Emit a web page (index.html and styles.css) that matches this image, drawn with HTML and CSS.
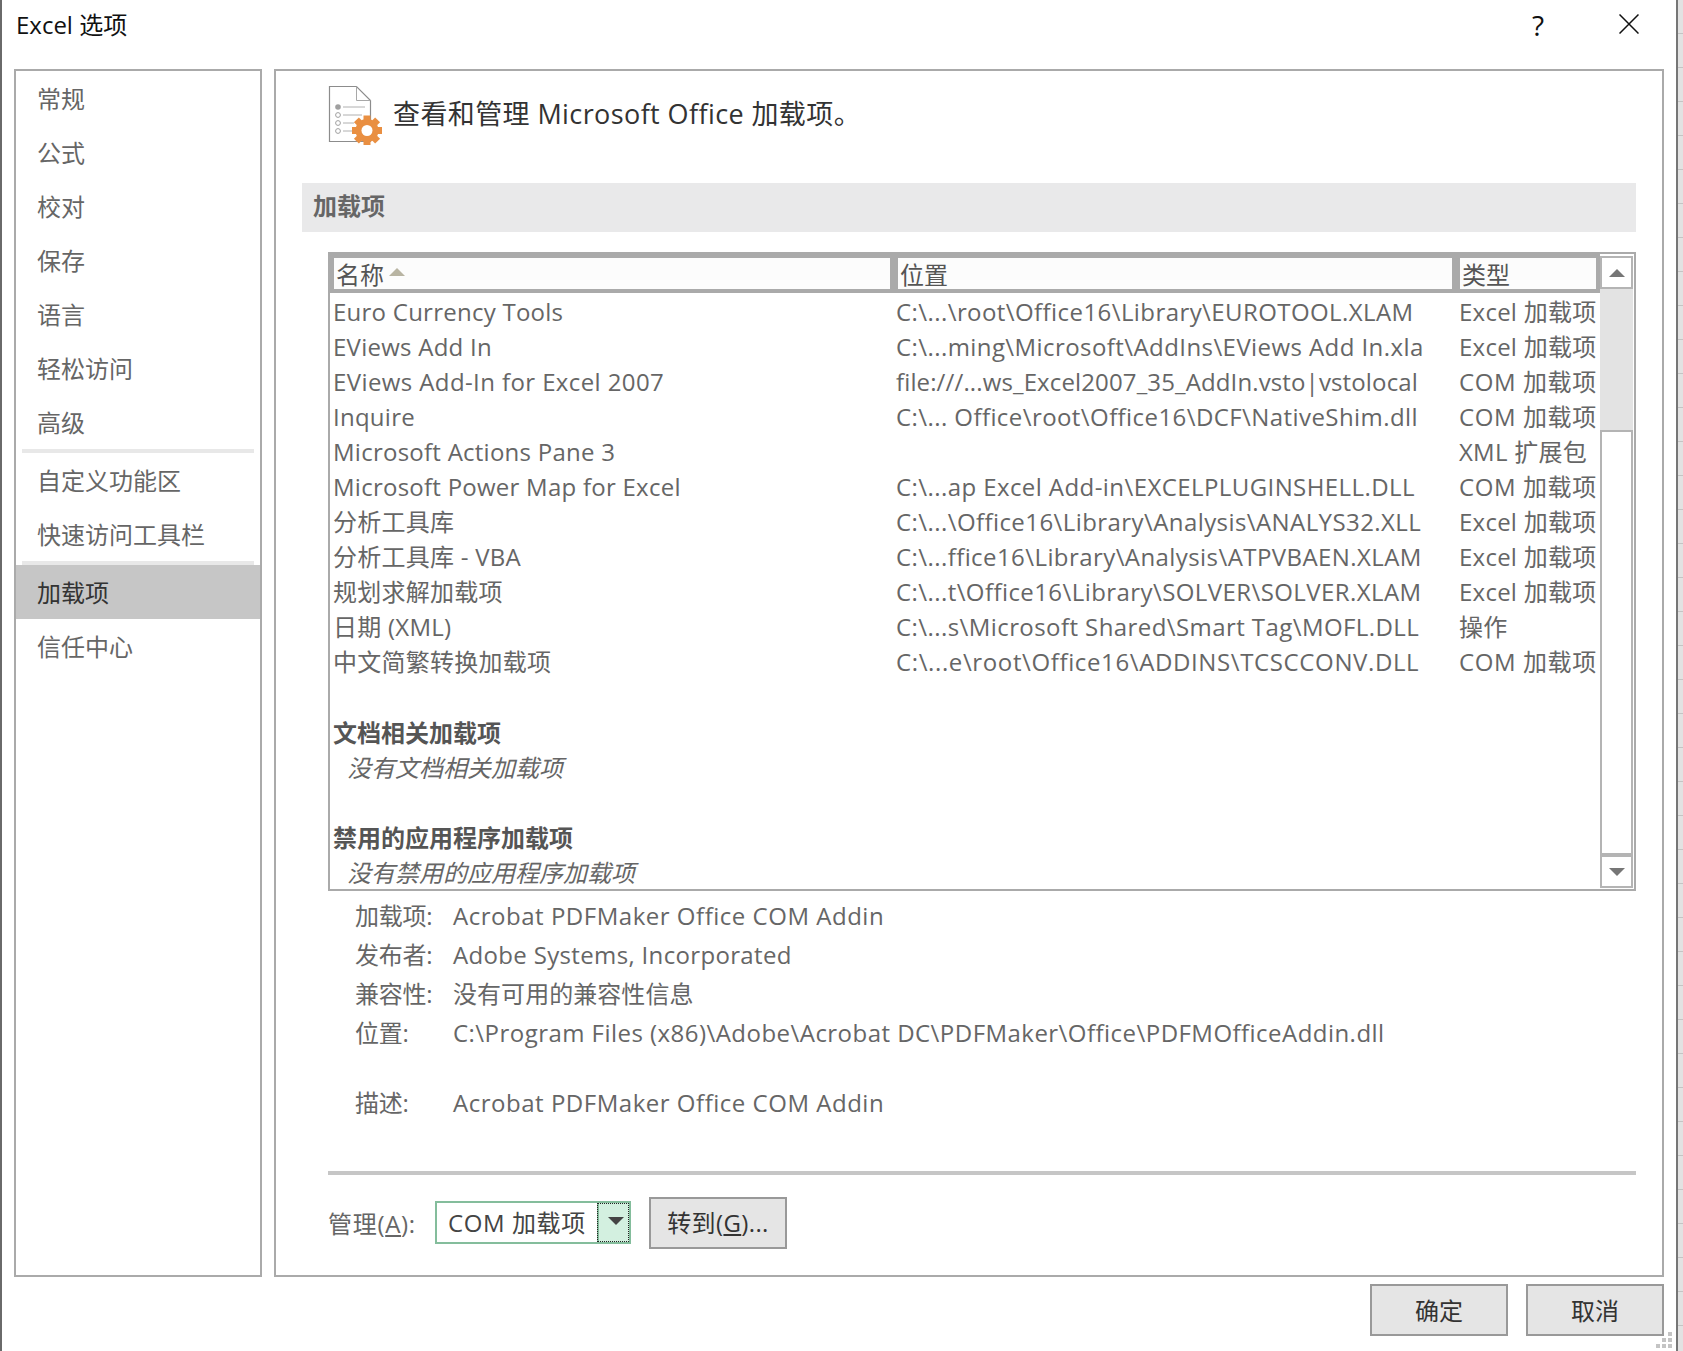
FILE: index.html
```html
<!DOCTYPE html>
<html lang="zh-CN">
<head>
<meta charset="utf-8">
<title>Excel 选项</title>
<link rel="stylesheet" href="styles.css">
</head>
<body>
<div class="desktop">
  <div class="edge-left"></div>
  <div class="window">
    <header class="titlebar">
      <span class="title">Excel 选项</span>
      <div class="title-buttons">
        <span class="help">?</span>
        <svg class="close" width="20" height="20" viewBox="0 0 20 20"><path d="M0.5 0.5 L19.5 19.5 M19.5 0.5 L0.5 19.5" stroke="#111" stroke-width="1.5" fill="none"/></svg>
      </div>
    </header>
    <div class="content">
      <nav class="nav">
        <div class="nav-item">常规</div>
        <div class="nav-item">公式</div>
        <div class="nav-item">校对</div>
        <div class="nav-item">保存</div>
        <div class="nav-item">语言</div>
        <div class="nav-item">轻松访问</div>
        <div class="nav-item">高级</div>
        <div class="nav-sep"></div>
        <div class="nav-item">自定义功能区</div>
        <div class="nav-item">快速访问工具栏</div>
        <div class="nav-sep"></div>
        <div class="nav-item selected">加载项</div>
        <div class="nav-item">信任中心</div>
      </nav>
      <main class="panel">
        <div class="heading">
          <svg class="heading-icon" width="56" height="60" viewBox="0 0 56 60">
            <path d="M1.5 1.5 H28.5 L42.5 15.5 V56.5 H1.5 Z" fill="#fff" stroke="#8c8c8c" stroke-width="1.2"/>
            <path d="M28.5 1.5 V15.5 H42.5" fill="none" stroke="#a8a8a8" stroke-width="1"/>
            <circle cx="10" cy="22" r="2.8" fill="#a0a0a0"/>
            <circle cx="10" cy="30" r="2.4" fill="#fff" stroke="#a0a0a0" stroke-width="1"/>
            <circle cx="10" cy="38" r="2.4" fill="#fff" stroke="#a0a0a0" stroke-width="1"/>
            <circle cx="10" cy="46" r="2.4" fill="#fff" stroke="#a0a0a0" stroke-width="1"/>
            <path d="M15 22 H37 M15 30 H34 M15 38 H26 M15 46 H24" stroke="#b0b0b0" stroke-width="1" fill="none"/>
            <g fill="#e98f42">
              <rect x="35.5" y="30.5" width="7" height="30"/>
              <rect x="35.5" y="30.5" width="7" height="30" transform="rotate(45 39 45.5)"/>
              <rect x="35.5" y="30.5" width="7" height="30" transform="rotate(90 39 45.5)"/>
              <rect x="35.5" y="30.5" width="7" height="30" transform="rotate(135 39 45.5)"/>
              <circle cx="39" cy="45.5" r="11.5"/>
            </g>
            <circle cx="39" cy="45.5" r="5.5" fill="#fff"/>
          </svg>
          <h1 class="heading-text">查看和管理 Microsoft Office 加载项。</h1>
        </div>
        <h2 class="section">加载项</h2>
        <div class="list">
          <div class="list-main">
            <div class="list-head">
              <div class="head-cell">名称<span class="sort"></span></div>
              <div class="head-cell">位置</div>
              <div class="head-cell">类型</div>
            </div>
            <div class="list-body">
              <div class="row"><span>Euro Currency Tools</span><span class="path">C:\...\root\Office16\Library\EUROTOOL.XLAM</span><span>Excel 加载项</span></div>
              <div class="row"><span>EViews Add In</span><span class="path">C:\...ming\Microsoft\AddIns\EViews Add In.xla</span><span>Excel 加载项</span></div>
              <div class="row"><span class="name-wide">EViews Add-In for Excel 2007</span><span class="path path-tight">file:///...ws_Excel2007_35_AddIn.vsto|vstolocal</span><span class="com">COM 加载项</span></div>
              <div class="row"><span>Inquire</span><span class="path">C:\... Office\root\Office16\DCF\NativeShim.dll</span><span class="com">COM 加载项</span></div>
              <div class="row"><span>Microsoft Actions Pane 3</span><span></span><span>XML 扩展包</span></div>
              <div class="row"><span>Microsoft Power Map for Excel</span><span class="path">C:\...ap Excel Add-in\EXCELPLUGINSHELL.DLL</span><span class="com">COM 加载项</span></div>
              <div class="row"><span>分析工具库</span><span class="path">C:\...\Office16\Library\Analysis\ANALYS32.XLL</span><span>Excel 加载项</span></div>
              <div class="row"><span>分析工具库 - VBA</span><span class="path">C:\...ffice16\Library\Analysis\ATPVBAEN.XLAM</span><span>Excel 加载项</span></div>
              <div class="row"><span>规划求解加载项</span><span class="path">C:\...t\Office16\Library\SOLVER\SOLVER.XLAM</span><span>Excel 加载项</span></div>
              <div class="row"><span>日期 (XML)</span><span class="path">C:\...s\Microsoft Shared\Smart Tag\MOFL.DLL</span><span>操作</span></div>
              <div class="row"><span>中文简繁转换加载项</span><span class="path path-wide">C:\...e\root\Office16\ADDINS\TCSCCONV.DLL</span><span class="com">COM 加载项</span></div>
              <div class="row"></div>
              <div class="group">文档相关加载项</div>
              <div class="empty">没有文档相关加载项</div>
              <div class="row"></div>
              <div class="group">禁用的应用程序加载项</div>
              <div class="empty">没有禁用的应用程序加载项</div>
            </div>
          </div>
          <div class="scrollbar">
            <div class="scroll-btn"><span class="arrow-up"></span></div>
            <div class="scroll-track"></div>
            <div class="scroll-thumb"></div>
            <div class="scroll-btn scroll-down"><span class="arrow-down"></span></div>
          </div>
        </div>
        <dl class="details">
          <div class="detail"><dt>加载项:</dt><dd>Acrobat PDFMaker Office COM Addin</dd></div>
          <div class="detail"><dt>发布者:</dt><dd class="tight">Adobe Systems, Incorporated</dd></div>
          <div class="detail"><dt>兼容性:</dt><dd class="cjk">没有可用的兼容性信息</dd></div>
          <div class="detail"><dt>位置:</dt><dd>C:\Program Files (x86)\Adobe\Acrobat DC\PDFMaker\Office\PDFMOfficeAddin.dll</dd></div>
          <div class="detail detail-gap"><dt>描述:</dt><dd>Acrobat PDFMaker Office COM Addin</dd></div>
        </dl>
        <div class="rule"></div>
        <div class="manage">
          <span class="manage-label">管理(<u>A</u>):</span>
          <div class="combo">
            <span class="combo-value">COM 加载项</span>
            <span class="combo-btn"><span class="combo-arrow"></span></span>
          </div>
          <button class="btn btn-go" type="button">转到(<u>G</u>)...</button>
        </div>
      </main>
    </div>
    <footer class="footer">
      <button class="btn btn-foot" type="button">确定</button>
      <button class="btn btn-foot" type="button">取消</button>
    </footer>
    <svg class="grip" width="16" height="16" viewBox="0 0 16 16" fill="#c4c4c4">
      <rect x="12" y="0" width="4" height="4"/>
      <rect x="6" y="6" width="4" height="4"/><rect x="12" y="6" width="4" height="4"/>
      <rect x="0" y="12" width="4" height="4"/><rect x="6" y="12" width="4" height="4"/><rect x="12" y="12" width="4" height="4"/>
    </svg>
  </div>
  <div class="edge-right"></div>
</div>
</body>
</html>
```
FILE: styles.css
```css
* { box-sizing: border-box; }
html, body { margin: 0; padding: 0; }
body {
  font-family: "Open Sans", "Noto Sans CJK SC", sans-serif;
  font-size: 24px;
  color: #666;
  background: #fff;
  overflow: hidden;
}
.desktop { display: flex; width: 1683px; height: 1351px; }
.edge-left { width: 2px; background: #6a6a6a; flex: none; }
.edge-right {
  width: 7px; flex: none;
  border-left: 2px solid #767676;
  background: repeating-linear-gradient(to bottom, #e2e2e2 0, #e2e2e2 33px, #c4c4c4 33px, #c4c4c4 34px);
}
.window { position: relative; flex: 1; background: #fff; display: flex; flex-direction: column; }

.titlebar { height: 69px; display: flex; justify-content: space-between; padding: 8px 0 0 14px; flex: none; }
.title { color: #111; line-height: 34px; }
.title-buttons { display: flex; align-items: flex-start; }
.help { color: #111; font-size: 28px; line-height: 34px; width: 16px; margin-right: 71px; }
.close { margin: 6px 37px 0 0; }

.content { display: flex; gap: 12px; padding-left: 12px; flex: none; }
.nav { width: 248px; height: 1208px; border: 2px solid #aaa; flex: none; }
.nav-item { height: 54px; line-height: 56px; padding-left: 21px; color: #666; }
.nav-item.selected { background: #c6c6c6; color: #333; }
.nav-sep { height: 4px; margin: 0 6px; background: #e8e8e8; }

.panel { width: 1390px; height: 1208px; border: 2px solid #aaa; flex: none; }
.heading { display: flex; height: 112px; padding: 14px 0 0 52px; }
.heading-icon { flex: none; }
.heading-text {
  margin: 0 0 0 9px; font-size: 27px; font-weight: 400; color: #333;
  line-height: 34px; padding-top: 12px; letter-spacing: 0.4px; white-space: nowrap;
}
.section {
  margin: 0 26px 20px; height: 49px; line-height: 45px; padding-left: 11px;
  background: #e9e9ea; font-size: 24px; font-weight: 700; color: #666;
}

.list {
  display: flex; height: 639px; margin: 0 26px 0 52px; border: 2px solid #aaa; overflow: hidden;
}
.list-main { width: 1270px; flex: none; overflow: hidden; }
.list-head {
  display: grid; grid-template-columns: 556px 554px 136px; column-gap: 8px;
  background: #aaa; padding: 4px 4px; height: 39px;
}
.head-cell { background: #fcfcfc; color: #555; line-height: 33px; height: 31px; padding-left: 2px; white-space: nowrap; }
.sort {
  display: inline-block; margin: 0 0 0 5px; vertical-align: 8px;
  border-left: 8px solid transparent; border-right: 8px solid transparent; border-bottom: 8px solid #b8b4a2;
}
.list-body { padding: 2px 0 0 3px; }
.row { display: grid; grid-template-columns: 563px 563px 1fr; height: 35px; line-height: 34px; white-space: nowrap; letter-spacing: 0.25px; }
.row .name-wide { letter-spacing: 0.4px; }
.row .path { letter-spacing: 0.42px; }
.row .path-tight { letter-spacing: 0.13px; }
.row .path-wide { letter-spacing: 0.62px; }
.row .com { letter-spacing: 0.6px; }
.group { height: 35px; line-height: 35px; font-weight: 700; color: #555; }
.empty { height: 35px; line-height: 35px; font-style: italic; padding-left: 14px; color: #666; }

.scrollbar { width: 33px; flex: none; display: flex; flex-direction: column; margin: 2px 0 1px; }
.scroll-btn {
  height: 33px; border: 2px solid #b4b4b4; background: #fff; flex: none;
  display: flex; align-items: center; justify-content: center;
}
.scroll-down { height: 31px; border-top: 0; }
.arrow-up { border-left: 8px solid transparent; border-right: 8px solid transparent; border-bottom: 8px solid #767676; }
.arrow-down { border-left: 8px solid transparent; border-right: 8px solid transparent; border-top: 8px solid #767676; }
.scroll-track { height: 141px; background: #e3e3e3; flex: none; }
.scroll-thumb { height: 427px; border: 2px solid #b4b4b4; border-bottom-width: 4px; background: #fff; flex: none; }

.details { margin: 5px 0 0 79px; height: 275px; }
.detail { display: flex; height: 39px; line-height: 40px; }
.detail-gap { margin-top: 31px; }
.detail dt { width: 98px; flex: none; letter-spacing: -0.25px; }
.detail dd { margin: 0; white-space: nowrap; letter-spacing: 0.52px; }
.detail dd.cjk { letter-spacing: 0.05px; }
.detail dd.tight { letter-spacing: 0.34px; }
.detail:nth-child(4) dd { letter-spacing: 0.46px; }

.rule { height: 4px; background: #c6c6c6; margin: 0 26px 0 52px; }
.manage { display: flex; align-items: flex-start; padding: 22px 0 0 52px; }
.manage-label { width: 107px; line-height: 50px; margin-top: 2px; color: #666; flex: none; letter-spacing: 0.7px; }
.manage u, .btn u { text-underline-offset: 2px; }
.combo {
  display: flex; width: 196px; height: 43px; margin-top: 4px; border: 2px solid #84bd9c; background: #fff; flex: none;
}
.combo-value { flex: 1; padding-left: 11px; line-height: 39px; color: #444; white-space: nowrap; letter-spacing: 0.6px; }
.combo-btn {
  width: 32px; flex: none; background: #d3f0e0; border-left: 2px solid #84bd9c;
  outline: 1px dotted #222; outline-offset: -1px;
  display: flex; align-items: center; justify-content: center;
}
.combo-arrow { border-left: 8px solid transparent; border-right: 8px solid transparent; border-top: 8px solid #444; margin: 0 0 3px 3px; }

.btn {
  font: inherit; color: #333; width: 138px; height: 52px; border: 2px solid #999; background: #e5e5e5;
  padding: 0; flex: none; line-height: 46px; border-radius: 0;
}
.btn-go { margin-left: 18px; letter-spacing: 0.37px; }
.btn-foot { padding-top: 2px; }
.footer { display: flex; justify-content: flex-end; gap: 18px; padding: 7px 12px 0 0; flex: none; }
.grip { position: absolute; right: 4px; bottom: 3px; }
```
